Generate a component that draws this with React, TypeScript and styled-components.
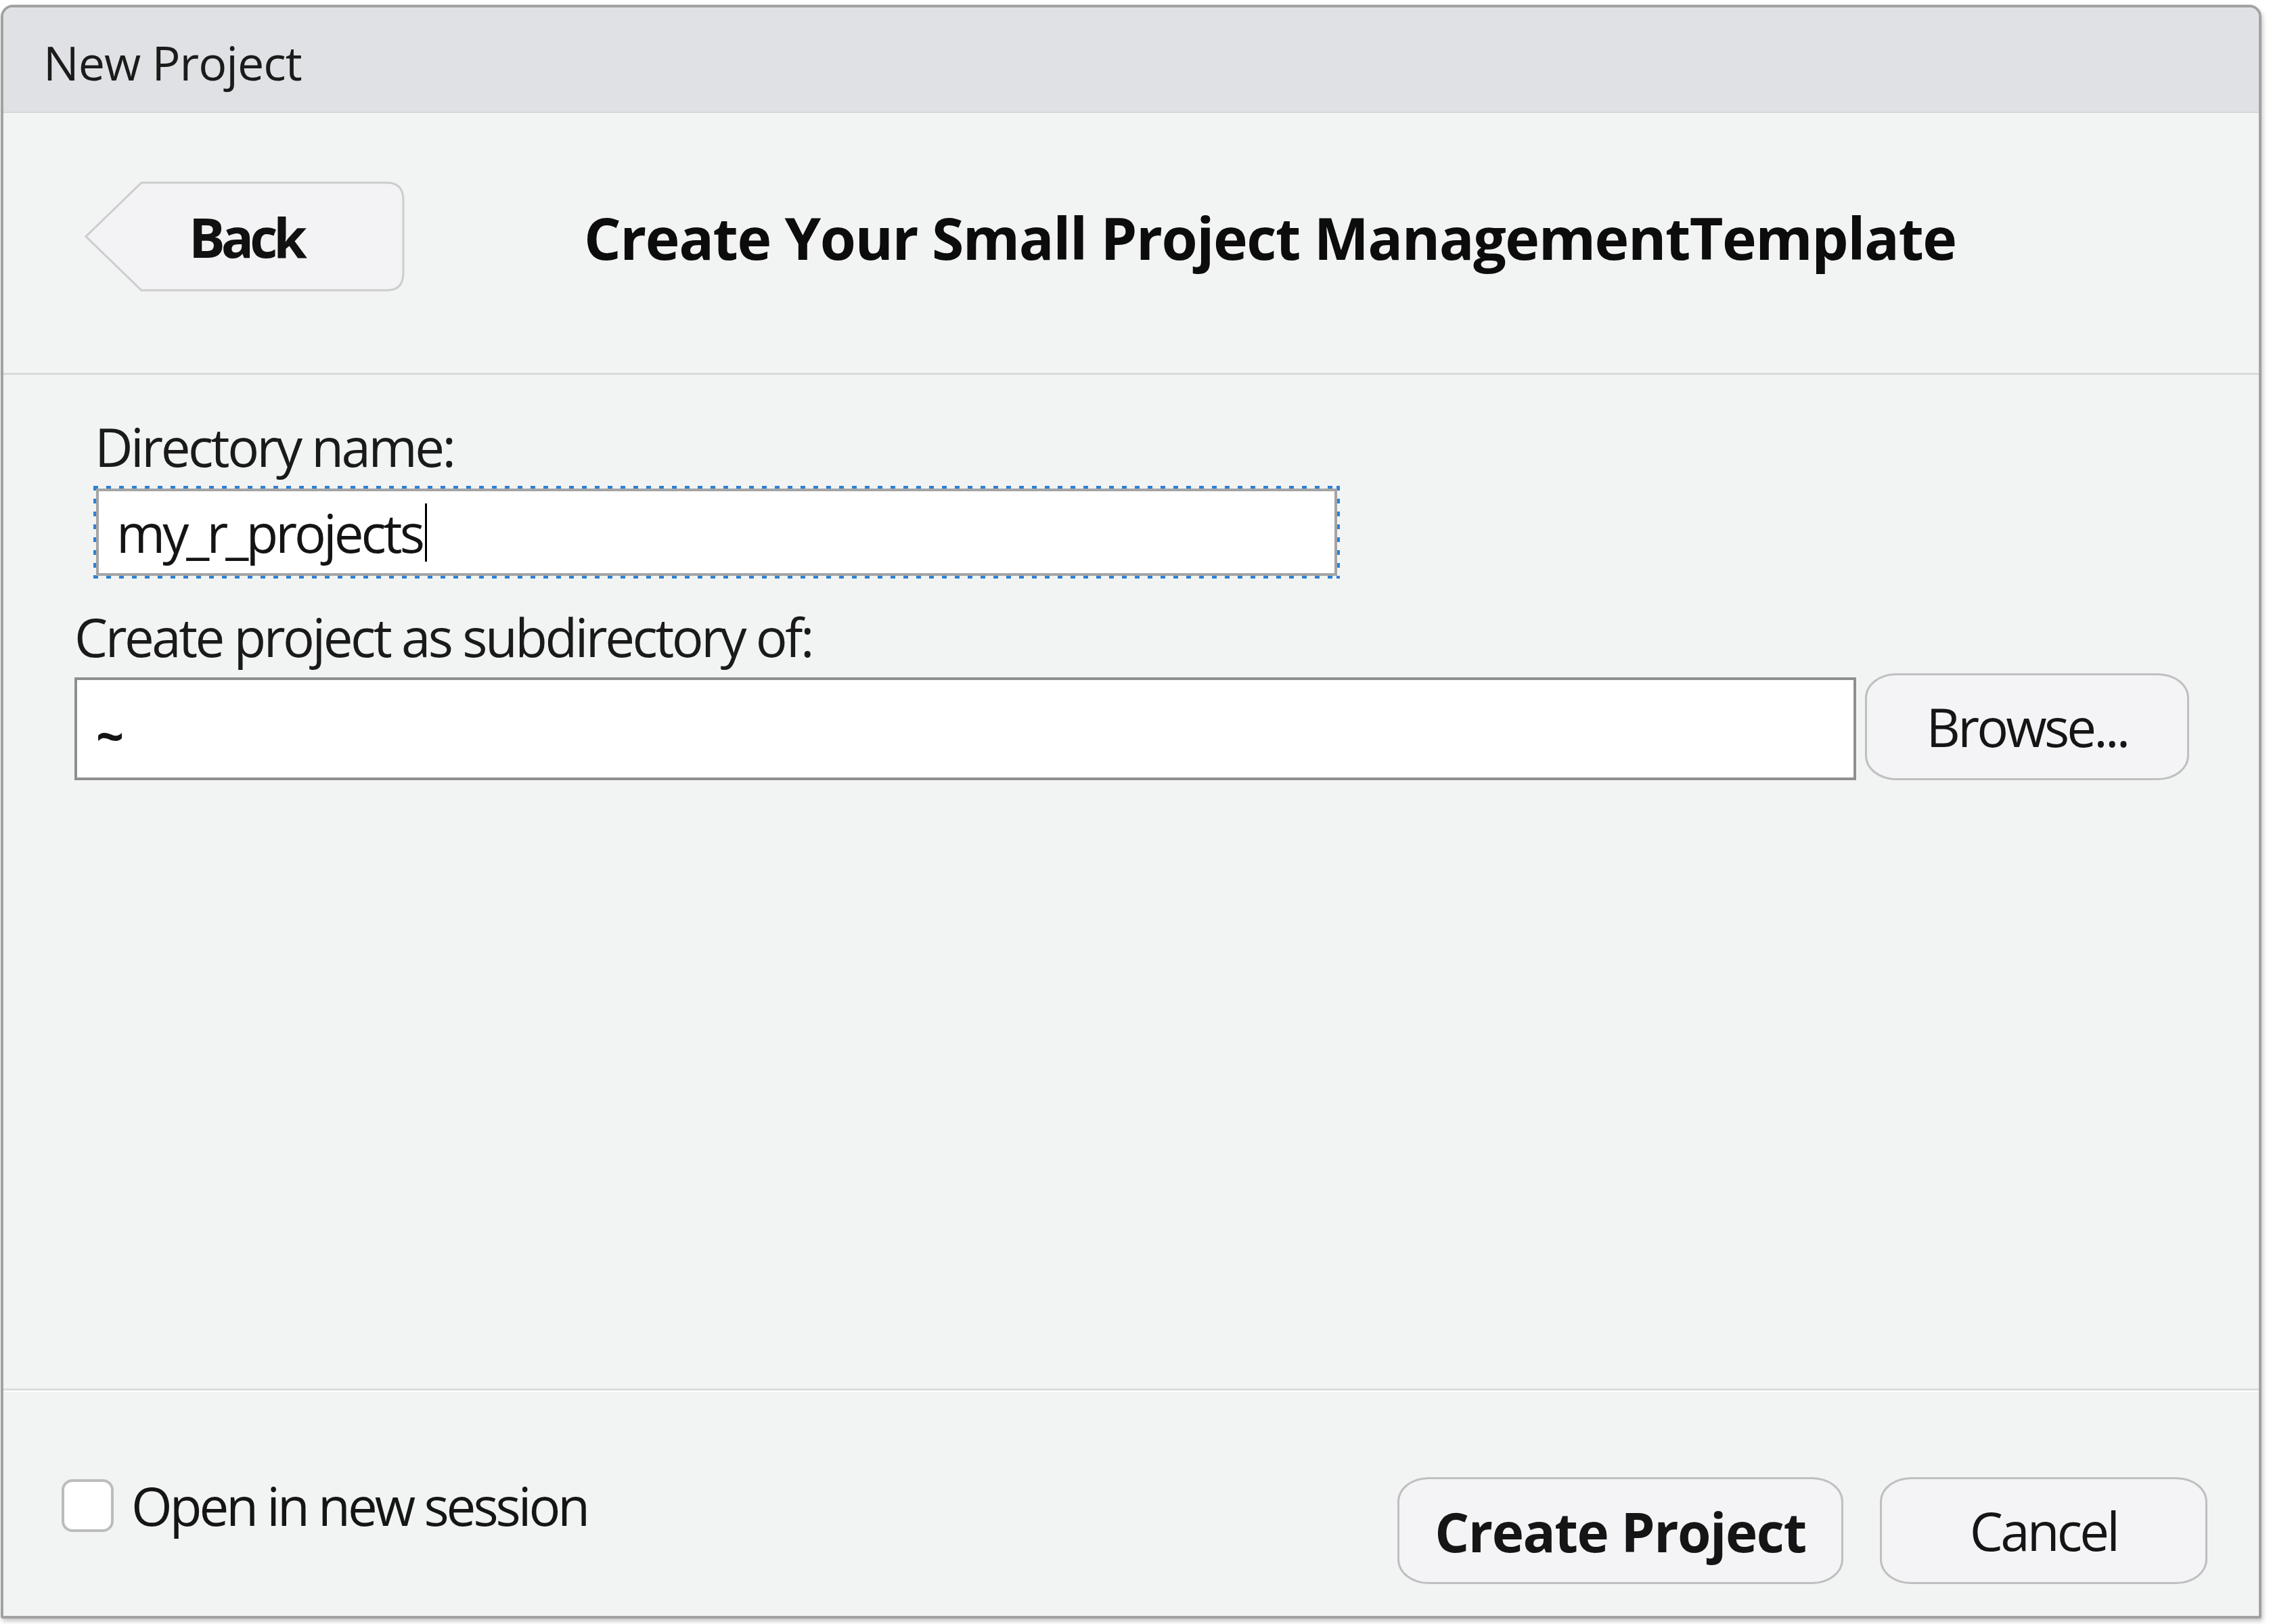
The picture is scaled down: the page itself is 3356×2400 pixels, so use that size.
import React from "react";
import styled, { createGlobalStyle } from "styled-components";

const Global = createGlobalStyle`
  html, body { margin: 0; padding: 0; background: #ffffff; }
  body {
    font-family: "Open Sans", "Noto Sans", "DejaVu Sans", sans-serif;
    color: #141414;
  }
  * { box-sizing: border-box; }
`;

const Page = styled.div`
  width: 3356px;
  height: 2400px;
  padding: 7px 0 0 1px;
`;

const Window = styled.div`
  width: 3341px;
  height: 2385px;
  border: 4px solid #a2a2a2;
  border-radius: 18px 18px 3px 3px;
  background: #f2f3f3;
  display: flex;
  flex-direction: column;
  overflow: hidden;
  box-shadow: 2px 4px 6px rgba(0, 0, 0, 0.22);
`;

const TitleBar = styled.div`
  height: 156px;
  flex: none;
  background: #e0e1e5;
  border-bottom: 2px solid #d6d7da;
  display: flex;
  align-items: center;
  padding: 8px 0 0 59px;
  font-size: 70px;
  letter-spacing: -1px;
  color: #1b1b1b;
`;

const Header = styled.div`
  height: 387px;
  flex: none;
  display: flex;
  align-items: center;
  padding: 0 0 0 120px;
  border-bottom: 3px solid #d9dadb;
`;

const BackButton = styled.button`
  position: relative;
  width: 473px;
  height: 163px;
  margin-top: -20px;
  border: none;
  background: transparent;
  padding: 0 0 0 4px;
  font-family: inherit;
  font-size: 80px;
  font-weight: 700;
  letter-spacing: -6px;
  color: #111;
  display: flex;
  align-items: center;
  justify-content: center;
`;

const BackShape = styled.svg`
  position: absolute;
  inset: 0;
  width: 100%;
  height: 100%;
  z-index: 0;
`;

const BackLabel = styled.span`
  position: relative;
  z-index: 1;
`;

const HeaderTitle = styled.h1`
  margin: -18px 0 0 265px;
  font-size: 86px;
  font-weight: 700;
  letter-spacing: -1.5px;
  color: #0c0c0c;
`;

const Form = styled.div`
  flex: 1;
  display: flex;
  flex-direction: column;
  padding: 56px 0 0 0;
  border-bottom: 3px solid #d9dadb;
`;

const Label = styled.label<{ $indent: number; $gap?: number }>`
  display: block;
  margin-left: ${(p) => p.$indent}px;
  margin-top: ${(p) => p.$gap ?? 0}px;
  height: 100px;
  line-height: 100px;
  font-size: 78px;
  letter-spacing: -3.5px;
  color: #1a1a1a;
`;

const FocusRing = styled.div`
  margin: 8px 0 0 133px;
  width: 1842px;
  height: 137px;
  padding: 4px;
  background-image:
    repeating-linear-gradient(90deg, #2c82d6 0 7px, transparent 7px 19px),
    repeating-linear-gradient(90deg, #2c82d6 0 7px, transparent 7px 19px),
    repeating-linear-gradient(180deg, #2c82d6 0 7px, transparent 7px 19px),
    repeating-linear-gradient(180deg, #2c82d6 0 7px, transparent 7px 19px);
  background-size: 100% 5px, 100% 5px, 5px 100%, 5px 100%;
  background-position: top left, bottom left, top left, top right;
  background-repeat: no-repeat;
`;

const TextBox = styled.div<{ $h: number }>`
  height: ${(p) => p.$h}px;
  background: #ffffff;
  border: 4px solid #8f8f8f;
  display: flex;
  align-items: center;
  font-size: 78px;
  letter-spacing: -4px;
  color: #141414;
  white-space: nowrap;
`;

const FocusedBox = styled(TextBox)`
  border-color: #a5a5a5;
  padding-left: 26px;
`;

const Caret = styled.span`
  display: inline-block;
  width: 3px;
  height: 86px;
  margin-left: 4px;
  background: #000;
`;

const PathRow = styled.div`
  display: flex;
  align-items: flex-end;
  gap: 13px;
  margin: 4px 0 0 105px;
`;

const PathBox = styled(TextBox)`
  width: 2633px;
  padding-left: 28px;
`;

const Tilde = styled.span`
  font-size: 72px;
  font-weight: 700;
  letter-spacing: 0;
  margin-top: 18px;
`;

const PushButton = styled.button<{ $w: number; $bold?: boolean }>`
  width: ${(p) => p.$w}px;
  height: 158px;
  border: 3px solid #bfbfc1;
  border-radius: 46px / 36px;
  background: #f4f4f6;
  font-family: inherit;
  font-size: ${(p) => (p.$bold ? 80 : 78)}px;
  font-weight: ${(p) => (p.$bold ? 700 : 400)};
  letter-spacing: ${(p) => (p.$bold ? -1.5 : -3.8)}px;
  color: #151515;
  padding: 0;
  display: flex;
  align-items: center;
  justify-content: center;
`;

const Footer = styled.div`
  height: 333px;
  flex: none;
  display: flex;
  align-items: flex-start;
  padding: 0 76px 0 86px;
  border-top: 2px solid #ffffff;
`;

const CheckRow = styled.label`
  display: flex;
  align-items: center;
  gap: 26px;
  margin-top: 115px;
  font-size: 78px;
  letter-spacing: -4px;
  color: #151515;
`;

const CheckBox = styled.span`
  width: 77px;
  height: 78px;
  border: 4px solid #bcbcbc;
  border-radius: 16px;
  background: #ffffff;
  flex: none;
`;

const ButtonGroup = styled.div`
  margin: 126px 0 0 auto;
  display: flex;
  gap: 54px;
`;

export default function App() {
  return (
    <>
      <Global />
      <Page>
        <Window>
          <TitleBar>New Project</TitleBar>
          <Header>
            <BackButton>
              <BackShape viewBox="0 0 473 163" preserveAspectRatio="none">
                <path
                  d="M84 2 H447 Q471 2 471 28 V135 Q471 161 447 161 H84 L2 81.5 Z"
                  fill="#f3f3f5"
                  stroke="#cdcdcf"
                  strokeWidth="3"
                />
              </BackShape>
              <BackLabel>Back</BackLabel>
            </BackButton>
            <HeaderTitle>Create Your Small Project ManagementTemplate</HeaderTitle>
          </Header>
          <Form>
            <Label $indent={135}>Directory name:</Label>
            <FocusRing>
              <FocusedBox $h={129}>
                my_r_projects
                <Caret />
              </FocusedBox>
            </FocusRing>
            <Label $indent={105} $gap={36}>
              Create project as subdirectory of:
            </Label>
            <PathRow>
              <PathBox $h={152}>
                <Tilde>~</Tilde>
              </PathBox>
              <PushButton $w={479}>Browse...</PushButton>
            </PathRow>
          </Form>
          <Footer>
            <CheckRow>
              <CheckBox />
              Open in new session
            </CheckRow>
            <ButtonGroup>
              <PushButton $w={659} $bold>
                Create Project
              </PushButton>
              <PushButton $w={484}>Cancel</PushButton>
            </ButtonGroup>
          </Footer>
        </Window>
      </Page>
    </>
  );
}
